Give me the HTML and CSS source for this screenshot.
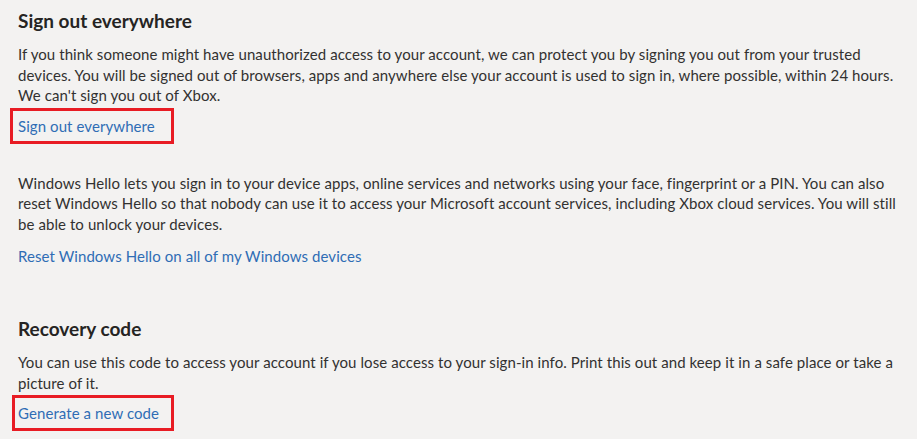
FILE: index.html
```html
<!DOCTYPE html>
<html lang="en">
<head>
<meta charset="utf-8">
<title>Security</title>
<link rel="stylesheet" href="styles.css">
</head>
<body>
<main class="page">
  <section class="section">
    <h2 class="title">Sign out everywhere</h2>
    <p class="text">If you think someone might have unauthorized access to your account, we can protect you by signing you out from your trusted devices. You will be signed out of browsers, apps and anywhere else your account is used to sign in, where possible, within 24 hours. We can't sign you out of Xbox.</p>
    <div class="boxed"><a class="link" href="#">Sign out everywhere</a></div>
  </section>
  <section class="section hello">
    <p class="text">Windows Hello lets you sign in to your device apps, online services and networks using your face, fingerprint or a PIN. You can also reset Windows Hello so that nobody can use it to access your Microsoft account services, including Xbox cloud services. You will still be able to unlock your devices.</p>
    <div class="plain"><a class="link" href="#">Reset Windows Hello on all of my Windows devices</a></div>
  </section>
  <section class="section recovery">
    <h2 class="title">Recovery code</h2>
    <p class="text">You can use this code to access your account if you lose access to your sign-in info. Print this out and keep it in a safe place or take a picture of it.</p>
    <div class="boxed boxed2"><a class="link" href="#">Generate a new code</a></div>
  </section>
</main>
</body>
</html>
```

FILE: styles.css
```css
html, body {
  margin: 0;
  padding: 0;
  background: #f3f2f1;
}
body {
  font-family: Lato, "Noto Sans", sans-serif;
  color: #323130;
  width: 917px;
  height: 439px;
  overflow: hidden;
}
.page {
  padding: 9px 0 0 18px;
  width: 882px;
}
.title {
  margin: 0;
  font-size: 19px;
  font-weight: 700;
  line-height: 24px;
  color: #252423;
}
.text {
  margin: 11px 0 0;
  font-size: 15px;
  line-height: 20.5px;
  letter-spacing: 0.08px;
}
.hello .text {
  margin-top: 10px;
}
.link {
  color: #2f6db5;
  text-decoration: none;
  font-size: 15px;
  line-height: 20px;
  letter-spacing: 0.08px;
}
.boxed {
  display: inline-block;
  margin: 2px 0 0 -8px;
  padding: 5px 16px 5px 5px;
  border: 3px solid #e81c24;
}
.boxed2 {
  margin-left: -6px;
  padding: 5px 12px 5px 3px;
}
.plain {
  margin-top: 12px;
}
.hello {
  margin-top: 29px;
}
.recovery {
  margin-top: 51px;
}
```
